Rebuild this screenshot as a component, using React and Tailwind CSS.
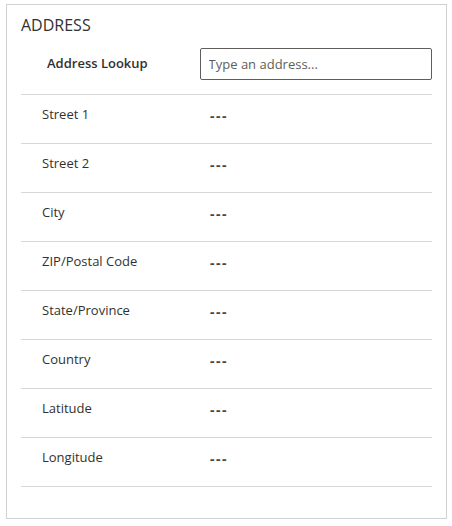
const fields = [
  "Street 1",
  "Street 2",
  "City",
  "ZIP/Postal Code",
  "State/Province",
  "Country",
  "Latitude",
  "Longitude",
];

export default function App() {
  return (
    <div
      className="min-h-screen bg-white pt-[4px] pl-[6px] text-[#323130]"
      style={{ fontFamily: '"Open Sans", "Noto Sans", Arial, sans-serif' }}
    >
      <section className="h-[515px] w-[441px] border border-[#d1d1d1] bg-white px-[14px]">
        <h2 className="pt-[9px] text-[16px] leading-[22px] font-normal">
          ADDRESS
        </h2>

        <div className="mt-[12px] flex items-center pb-[14px]">
          <div className="w-[179px] pl-[26px] text-[13px] font-semibold">
            Address Lookup
          </div>
          <input
            type="text"
            placeholder="Type an address..."
            className="h-[32px] w-[233px] rounded-[2px] border border-[#605e5c] px-[8px] text-[13px] text-[#323130] outline-none placeholder:text-[#605e5c]"
          />
        </div>

        <div className="border-b border-[#d8d8d8]">
          {fields.map((label) => (
            <div
              key={label}
              className="flex h-[49px] border-t border-[#d8d8d8] pt-[9px] text-[13px] leading-[20px]"
            >
              <div className="w-[179px] pl-[21px]">{label}</div>
              <div className="mt-[2px] pl-[10px] text-[14px] font-bold tracking-[1.5px] text-[#484644]">
                ---
              </div>
            </div>
          ))}
        </div>
      </section>
    </div>
  );
}
